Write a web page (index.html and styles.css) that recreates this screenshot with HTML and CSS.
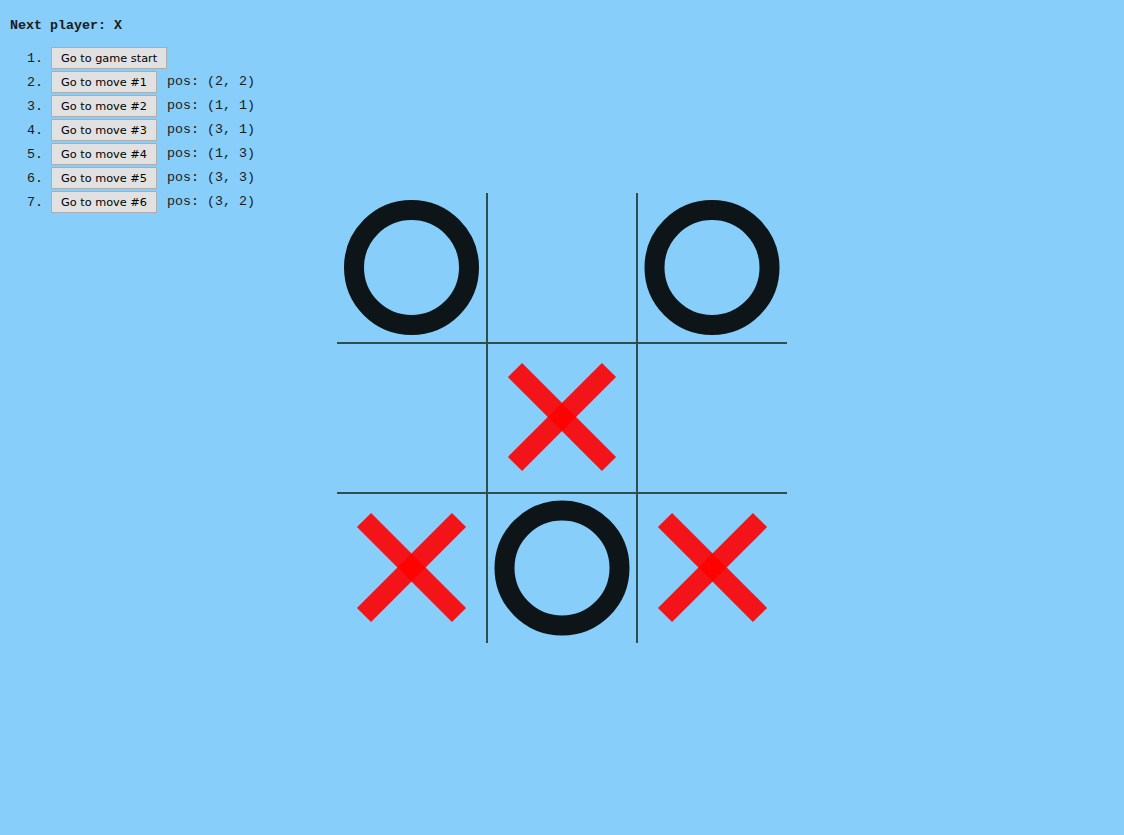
FILE: index.html
```html
<!DOCTYPE html>
<html>
<head>
<meta charset="utf-8">
<link rel="stylesheet" href="styles.css">
</head>
<body>
<div class="game">
  <div class="info">
    <div class="status">Next player: X</div>
    <ol class="moves">
      <li><button class="move-btn">Go to game start</button></li>
      <li><button class="move-btn">Go to move #1</button><span class="pos">pos: (2, 2)</span></li>
      <li><button class="move-btn">Go to move #2</button><span class="pos">pos: (1, 1)</span></li>
      <li><button class="move-btn">Go to move #3</button><span class="pos">pos: (3, 1)</span></li>
      <li><button class="move-btn">Go to move #4</button><span class="pos">pos: (1, 3)</span></li>
      <li><button class="move-btn">Go to move #5</button><span class="pos">pos: (3, 3)</span></li>
      <li><button class="move-btn">Go to move #6</button><span class="pos">pos: (3, 2)</span></li>
    </ol>
  </div>
  <div class="board">
    <svg width="450" height="450" viewBox="0 0 450 450">
      <g class="grid-lines">
        <line x1="150" y1="0" x2="150" y2="450"/>
        <line x1="300" y1="0" x2="300" y2="450"/>
        <line x1="0" y1="150" x2="450" y2="150"/>
        <line x1="0" y1="300" x2="450" y2="300"/>
      </g>
      <g class="o">
        <circle cx="74.5" cy="74.5" r="57.5"/>
        <circle cx="375" cy="74.5" r="57.5"/>
        <circle cx="225" cy="375" r="57.5"/>
      </g>
      <g class="x">
        <line x1="178" y1="177" x2="272" y2="271"/>
        <line x1="272" y1="177" x2="178" y2="271"/>
        <line x1="27" y1="327" x2="122" y2="422"/>
        <line x1="122" y1="327" x2="27" y2="422"/>
        <line x1="328" y1="327" x2="423" y2="422"/>
        <line x1="423" y1="327" x2="328" y2="422"/>
      </g>
    </svg>
  </div>
</div>
</body>
</html>
```

FILE: styles.css
```css
html, body {
  background: #87cefa;
}
body {
  margin: 8px;
  font-family: "Liberation Mono", "DejaVu Sans Mono", monospace;
  font-size: 13.33px;
  color: #1a1a1a;
}
.game {
  display: grid;
  min-height: calc(100vh - 16px);
}
.info, .board {
  grid-area: 1 / 1;
}
.info {
  align-self: start;
  justify-self: start;
  padding-top: 10px;
}
.status {
  font-weight: bold;
  line-height: 15px;
  margin-bottom: 14px;
  padding-left: 2px;
}
.moves {
  margin: 0;
  padding-left: 43px;
}
.moves li {
  height: 22px;
  line-height: 22px;
  margin-bottom: 2px;
}
.move-btn {
  font-family: "DejaVu Sans", Verdana, sans-serif;
  font-size: 11.3px;
  height: 22px;
  padding: 1px 9px 0;
  margin: 0;
  background: #e1e1e1;
  border: 1px solid #adadad;
  border-radius: 0;
  color: #000;
  vertical-align: middle;
}
.pos {
  margin-left: 10px;
  vertical-align: middle;
}
.board {
  place-self: center;
  width: 450px;
  height: 450px;
}
.board svg {
  display: block;
}
.grid-lines line {
  stroke: #2f4f4f;
  stroke-width: 2;
}
.o circle {
  fill: none;
  stroke: #0d1519;
  stroke-width: 20;
}
.x line {
  stroke: rgba(255, 0, 0, 0.9);
  stroke-width: 20;
}
```
